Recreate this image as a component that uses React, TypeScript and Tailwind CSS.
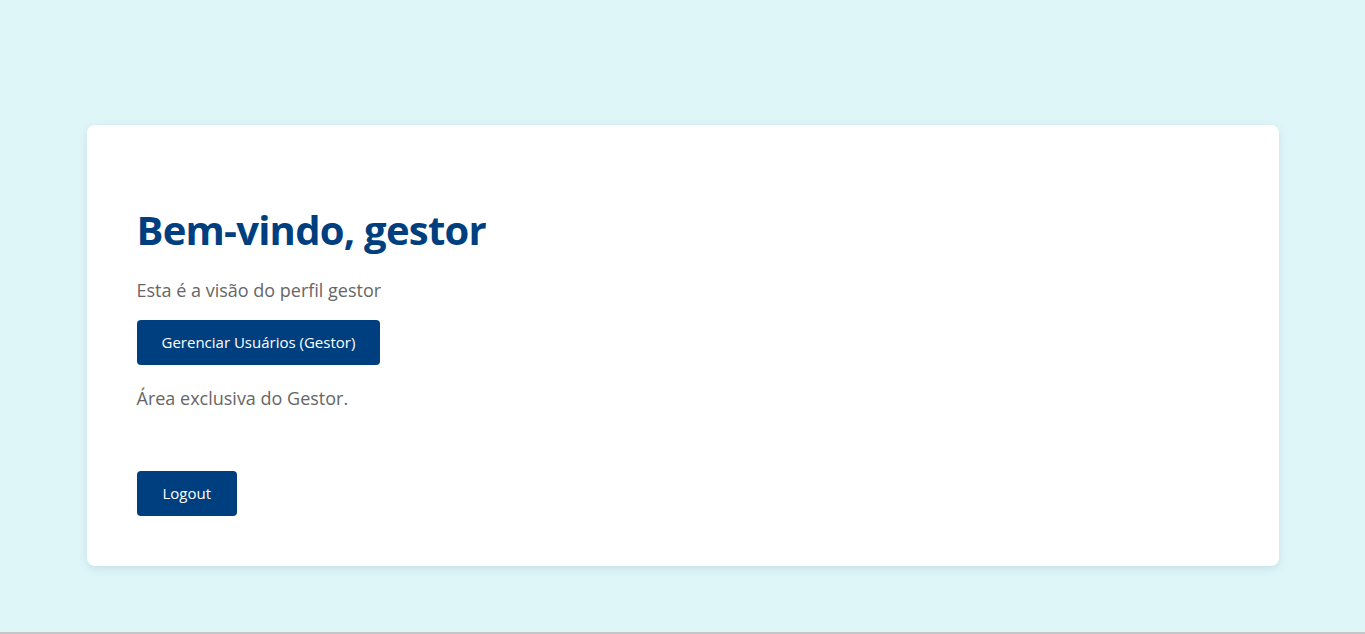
export default function App() {
  const font = { fontFamily: '"Open Sans", "Noto Sans", sans-serif' };
  return (
    <div
      className="h-[634px] bg-[#dff6f9] border-b-2 border-[#c6c6c6] pt-[125px]"
      style={font}
    >
      {/* Card */}
      <div className="mx-auto w-[1192px] bg-white rounded-lg shadow-[0_3px_10px_rgba(0,80,100,0.12)] p-[50px]">
        <h1 className="mt-[31px] text-[40px] leading-[48px] font-bold tracking-[-0.75px] text-[#003f7f]">
          Bem-vindo, gestor
        </h1>
        <p className="mt-[23px] text-[18px] leading-[27px] text-[#666666]">
          Esta é a visão do perfil gestor
        </p>
        <button className="mt-[16px] h-[45px] px-[25px] rounded bg-[#003f7f] text-white text-[15px]">
          Gerenciar Usuários (Gestor)
        </button>
        <p className="mt-[20px] text-[18px] leading-[27px] text-[#666666]">
          Área exclusiva do Gestor.
        </p>
        <button className="mt-[59px] h-[45px] px-[26px] rounded bg-[#003f7f] text-white text-[15px] block">
          Logout
        </button>
      </div>
    </div>
  );
}
